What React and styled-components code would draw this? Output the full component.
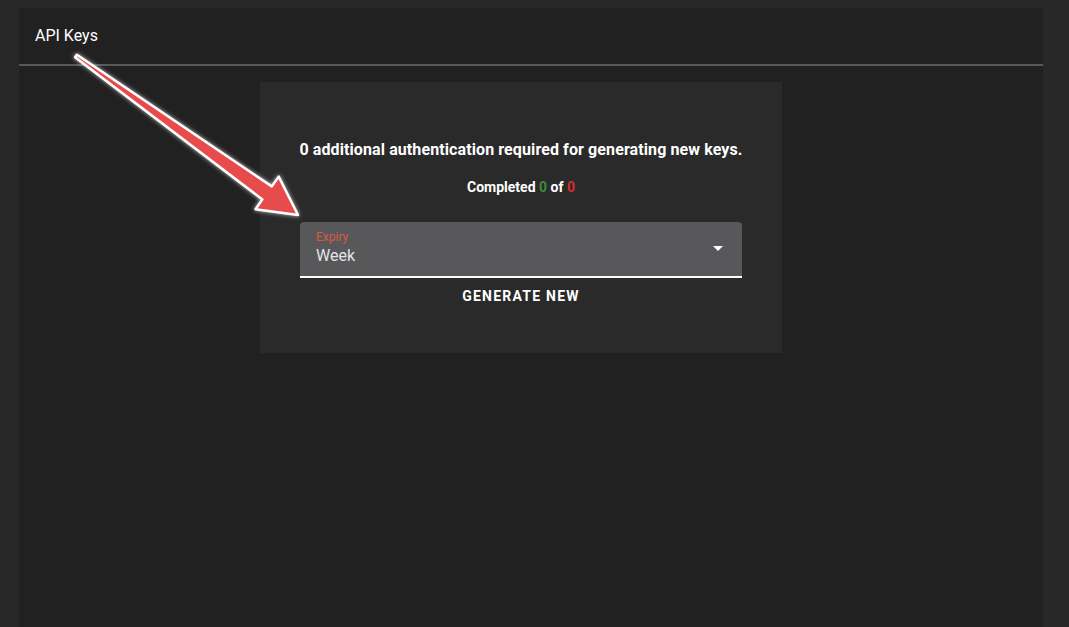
import React from "react";
import styled, { createGlobalStyle } from "styled-components";

const GlobalStyle = createGlobalStyle`
    html, body {
        margin: 0;
        padding: 0;
        background-color: #282828;
        font-family: Roboto, "Liberation Sans", sans-serif;
    }
    * {
        box-sizing: border-box;
    }
`;

const Page = styled.div`
    position: relative;
    width: 100vw;
    height: 100vh;
    overflow: hidden;
    padding: 8px 26px 0 19px;
`;

const Panel = styled.div`
    height: 100%;
    background-color: #212121;
    display: flex;
    flex-direction: column;
`;

const Header = styled.div`
    height: 58px;
    display: flex;
    align-items: center;
    padding: 0 16px 2px;
    border-bottom: 2px solid #58585d;
    color: #ffffff;
    font-size: 16px;
`;

const Body = styled.div`
    padding: 16px 0 0 241px;
`;

const Card = styled.div`
    width: 522px;
    background-color: #2a2a2a;
    padding: 56px 40px 39px;
    display: flex;
    flex-direction: column;
    align-items: center;
`;

const Heading = styled.div`
    color: #ffffff;
    font-size: 16px;
    font-weight: 700;
    line-height: 24px;
    letter-spacing: 0.1px;
    white-space: nowrap;
`;

const Progress = styled.div`
    margin-top: 15px;
    color: #ffffff;
    font-size: 14px;
    font-weight: 700;
    line-height: 20px;
`;

const Count = styled.span`
    color: ${(p) => (p.$done ? "#388e3c" : "#d32f2f")};
`;

const Select = styled.div`
    margin-top: 25px;
    width: 100%;
    height: 56px;
    background-color: #58585a;
    border-radius: 4px 4px 0 0;
    border-bottom: 2px solid #ffffff;
    display: flex;
    align-items: center;
    justify-content: space-between;
    padding: 0 19px 0 16px;
`;

const SelectText = styled.div`
    display: flex;
    flex-direction: column;
    padding-bottom: 2px;
`;

const Label = styled.span`
    color: #d65b3e;
    font-size: 12px;
    line-height: 14px;
`;

const Value = styled.span`
    margin-top: 2px;
    color: #e4e4e4;
    font-size: 16px;
    line-height: 20px;
`;

const Caret = styled.span`
    width: 0;
    height: 0;
    border-left: 5px solid transparent;
    border-right: 5px solid transparent;
    border-top: 5px solid #ffffff;
    margin-bottom: 2px;
`;

const Button = styled.button`
    height: 36px;
    padding: 0 16px;
    border: none;
    background: transparent;
    color: #ffffff;
    font-family: Roboto, "Liberation Sans", sans-serif;
    font-size: 14px;
    font-weight: 700;
    letter-spacing: 1.25px;
    cursor: pointer;
`;

const Overlay = styled.svg`
    position: absolute;
    top: 0;
    left: 0;
    pointer-events: none;
    overflow: visible;
`;

const Arrow = () => (
    <Overlay width="1069" height="627" viewBox="0 0 1069 627">
        <defs>
            <filter id="glow" x="-20%" y="-20%" width="140%" height="140%">
                <feGaussianBlur in="SourceAlpha" stdDeviation="2.2" result="blur" />
                <feFlood floodColor="#ffffff" floodOpacity="0.7" />
                <feComposite in2="blur" operator="in" result="halo" />
                <feMerge>
                    <feMergeNode in="halo" />
                    <feMergeNode in="SourceGraphic" />
                </feMerge>
            </filter>
        </defs>
        <polygon
            points="76.9,54.8 271.8,186.4 278.7,176.6 298,215 255.5,209.2 262.4,199.4 75.1,57.2"
            fill="#e84c4c"
            stroke="#ffffff"
            strokeWidth="2.5"
            strokeLinejoin="round"
            filter="url(#glow)"
        />
    </Overlay>
);

const App = () => {
    return (
        <Page>
            <GlobalStyle />
            <Panel>
                <Header>API Keys</Header>
                <Body>
                    <Card>
                        <Heading>
                            0 additional authentication required for generating new keys.
                        </Heading>
                        <Progress>
                            Completed <Count $done>0</Count> of <Count>0</Count>
                        </Progress>
                        <Select>
                            <SelectText>
                                <Label>Expiry</Label>
                                <Value>Week</Value>
                            </SelectText>
                            <Caret />
                        </Select>
                        <Button>GENERATE NEW</Button>
                    </Card>
                </Body>
            </Panel>
            <Arrow />
        </Page>
    );
};

export default App;
